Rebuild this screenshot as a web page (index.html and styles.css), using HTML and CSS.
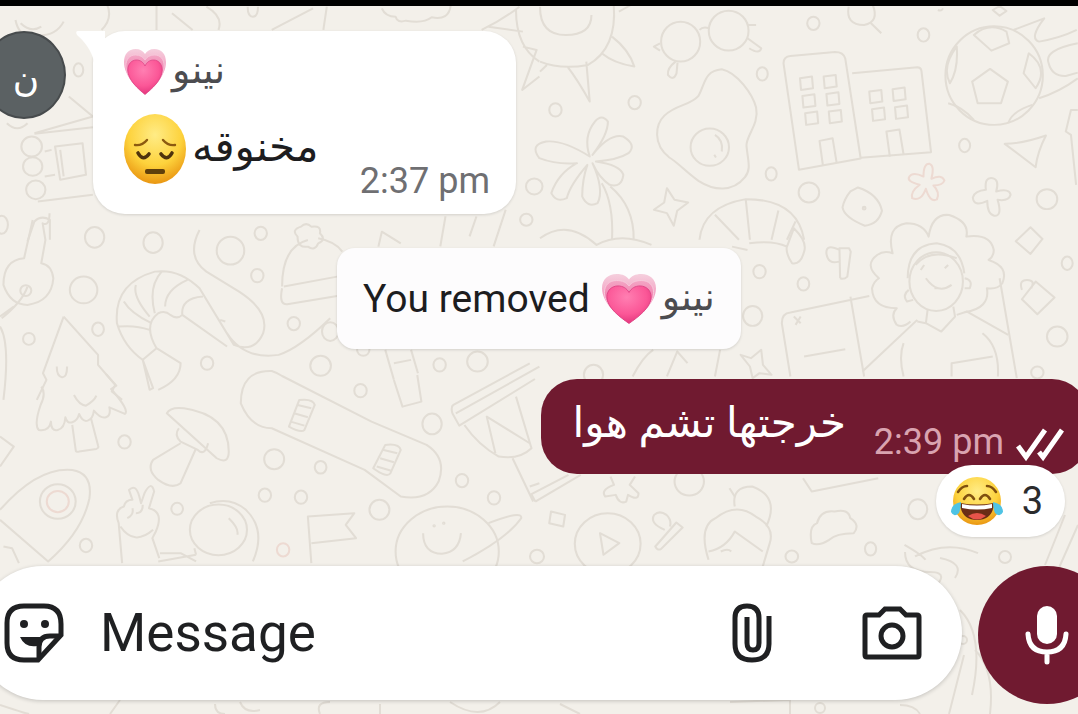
FILE: index.html
```html
<!DOCTYPE html>
<html lang="en">
  <head>
    <meta charset="UTF-8" />
    <meta name="viewport" content="width=device-width, initial-scale=1.0" />
    <title>Chat</title>
    <link rel="stylesheet" href="styles.css">
  </head>
  <body>
    <!-- wallpaper doodles -->
    <svg class="wallpaper" viewBox="0 0 1078 714" preserveAspectRatio="xMinYMin slice" aria-hidden="true">
      <defs>
        <linearGradient id="heart-back" x1="0" y1="0" x2="0" y2="1">
          <stop offset="0" stop-color="#f5cfdd" />
          <stop offset=".5" stop-color="#f39abf" />
          <stop offset="1" stop-color="#f0609c" />
        </linearGradient>
        <linearGradient id="heart-mid" x1="0" y1="0" x2="0" y2="1">
          <stop offset="0" stop-color="#f3a5c4" />
          <stop offset="1" stop-color="#ee5596" />
        </linearGradient>
        <radialGradient id="heart-front" cx=".45" cy=".3" r=".75">
          <stop offset="0" stop-color="#ff7fb2" />
          <stop offset=".6" stop-color="#fb5797" />
          <stop offset="1" stop-color="#e02f78" />
        </radialGradient>
        <radialGradient id="face" cx=".5" cy=".3" r=".72">
          <stop offset="0" stop-color="#ffec86" />
          <stop offset=".6" stop-color="#fdd23c" />
          <stop offset="1" stop-color="#e8920f" />
        </radialGradient>
        <symbol id="heart" viewBox="0 0 44 46" preserveAspectRatio="none">
          <path fill="url(#heart-back)" d="M22 45C14 39 0 27 0 13 0 5 5 0 12 0c5 0 8 2 10 5 2-3 5-5 10-5 7 0 12 5 12 13 0 14-14 26-22 32z" />
          <path fill="url(#heart-mid)" stroke="#f7cbdc" stroke-width=".8" d="M22 45C14 39 2 29 2 17 2 10 6 6 12 6c5 0 8 2 10 5 2-3 5-5 10-5 6 0 10 4 10 11 0 12-12 22-20 28z" />
          <path fill="url(#heart-front)" stroke="#de4384" stroke-width=".8" d="M22 45.500C15 40 4 31 4 21c0-6 4-10 9-10 4 0 7 2 9 6 2-4 5-6 9-6 5 0 9 4 9 10 0 10-11 19-18 24.500z" />
        </symbol>
      </defs>

      <g class="doodle" transform="scale(.344 .333)">
        <path d="M45 60q10 50 45 45 70 10 95-40M60 70q30 30 60 10M310 10q20 45-15 80M455 10v80M500 40l60 50M600 20q50 30 35 70M720 20q0 30 15 30t15-30M790 90l120-65M950 20l-10 70M1110 25q10 25 40 25 5 20 30 12 50 10 75-10 50 10 55-35M1400 90q60-30 110-70M1420 80l100 15M1500 30q0 110 68 155M1520 140l40 10-42 120 50-40" />
        <ellipse cx="228" cy="210" rx="14" ry="20" /><path d="M20 370q30 30 60 0M200 290l70 60-170 50M100 402l170-20M160 440l80-10 10 95-75 15zM175 450l10 80M110 605l160-20M130 455l20-5M130 530l30-5" />
        <circle cx="92" cy="440" r="30" /><circle cx="95" cy="500" r="28" /><circle cx="104" cy="570" r="28" />
        <ellipse cx="5" cy="675" rx="18" ry="27" /><path d="M80 725l20-60q20-20 45-5v60" />
        <circle cx="1553" cy="560" r="24" /><circle cx="1530" cy="660" r="18" />
        <path d="M1295 650l-15 90M1385 650l-20 60M1470 630l-35 110" />
      </g>

      <g class="doodle" transform="translate(540) scale(.343 .333)">
        <path d="M0 20q0 85 75 85t75-60M215 15q10 130-75 180-80 15-140-10M210 110q50 40 65 90-60-10-95-40M0 215l20-20M80 200q30 40 65 105l-10-120" />
        <ellipse cx="410" cy="125" rx="57" ry="60" /><ellipse cx="550" cy="92" rx="58" ry="60" />
        <path d="M465 90q10-12 28-5M350 130l-18 10 18 12M395 185q-25 20-22 40 15 20 25-5l3-32M605 115l40 30q-5 20-35 0M605 75h25M230 35l35-20" />
        <path d="M900 20q-10 55 45 55 45-10 25-60M965 70l30 30M1175 25q-5 10-15 5M1320 30l20-12 20 15-20 14z" />
        <ellipse cx="797" cy="70" rx="18" ry="20" /><ellipse cx="1118" cy="105" rx="17" ry="20" /><ellipse cx="648" cy="222" rx="16" ry="20" /><ellipse cx="276" cy="308" rx="18" ry="20" /><ellipse cx="45" cy="330" rx="18" ry="20" /><ellipse cx="674" cy="522" rx="16" ry="20" /><ellipse cx="1238" cy="437" rx="16" ry="20" /><ellipse cx="784" cy="578" rx="30" ry="30" /><ellipse cx="1478" cy="598" rx="30" ry="30" />
        <path d="M530 208c45 10 90 75 100 115 10 50-30 85-28 115 4 45 15 70-5 95-35 45-90 40-135 10-35-25-60-55-85-70-50-40-40-100-15-125 35-35 75-30 100-60 20-35 15-75 68-80z" />
        <ellipse cx="495" cy="442" rx="56" ry="56" /><path d="M510 405q25 15 20 50M508 465l5 8" />
        <path d="M145 470q-20-60 15-105 20-25 38 0 0 40-45 100 50-65 90-55 40 25 15 50-30 20-95 25 70 10 80 40-5 40-40 30-30-20-50-65 35 80 15 120-30 15-45-20 0-50 15-95-50 60-60 100-30 15-45-15 20-60 75-90-60 5-110-15-30-40 20-50 50-5 127 45z" />
        <path d="M180 550q35 60 30 170M205 560q70 60 68 160M370 565l22 35 40 8-32 25-10 45-20-38-38-10 30-22z" />
        <path d="M465 720q10-100 135-122 150 0 170 122M510 645l70 75M600 600l12 120M695 632l-20 88M745 665l-25 55" />
        <path d="M755 510L710 190q0-20 20-22l130-12q25 0 30 20l45 300zM910 220l190-18q10 0 12 10l28 245-205 17" />
        <path d="M758 235l35-5 3 35-35 5zM827 230l35-5 3 35-35 5zM765 288l35-5 3 35-35 5zM835 282l35-5 3 35-35 5zM773 340l35-5 3 35-35 5zM842 335l35-5 3 35-35 5zM960 275l35-5 3 35-35 5zM1028 268l35-5 3 35-35 5zM968 328l35-5 3 35-35 5zM1035 322l35-5 3 35-35 5zM825 498l-10-75 38-8 12 75M1020 470l-10-75 38-6 12 75" />
        <path d="M905 575l22-12q60 20 70 70-10 40-50 45-60-25-65-55 5-25 23-48z" /><circle cx="945" cy="625" r="4" />
        <path class="blush" d="M1118 530q0-40 18-38 15 5 5 45 30-15 38 5-5 15-32 15 20 20 10 42-20 10-32-32-15 40-40 28-5-20 22-40-40-10-30-25 10-15 41 0z" />
        <path d="M1300 570q-5-40 20-35 20 5 10 40 40-10 42 10-5 20-38 15 15 50-10 48-20-5-20-45-40 20-42-10 5-20 38-23z" />
        <ellipse cx="1324" cy="227" rx="142" ry="148" />
        <path d="M1260 245l52-38 52 38-20 65h-68zM1265 105q45-40 95-10l8 35-52 22zM1215 140q-45 60-20 110 25-40 20-110zM1425 160l-15 60 35 45q40-60-20-105zM1190 310q40 10 75 50M1365 370q10-35 70-55M1380 90l90-35q-45 60-15 70 60-10 110-35M1568 130q-100 20-85 60 10 40 50 38l35-10M1455 295q60-20 113-60" />
        <path d="M1355 432q50 0 120-25-25 50-30 95zM1568 330l-20 0-15 65 15 10 15 150" />
      </g>

      <g class="doodle" transform="translate(0 220) scale(.344 .333)">
        <path d="M95 0L70 115q-60 5-60 80 20 60 70 60 70-10 75-80-5-40-35-45l12-70-8-50q20 10 20-30M5 295q60-50 75-95M0 320q30 50 10 220M0 290l40-30" />
        <ellipse cx="75" cy="212" rx="16" ry="16" /><ellipse cx="275" cy="52" rx="28" ry="31" /><ellipse cx="445" cy="68" rx="28" ry="31" /><ellipse cx="243" cy="210" rx="40" ry="40" /><ellipse cx="670" cy="92" rx="40" ry="42" /><ellipse cx="758" cy="40" rx="18" ry="20" /><ellipse cx="748" cy="167" rx="18" ry="20" /><ellipse cx="285" cy="328" rx="17" ry="20" /><ellipse cx="84" cy="357" rx="17" ry="18" /><ellipse cx="602" cy="430" rx="18" ry="20" /><ellipse cx="932" cy="438" rx="30" ry="30" /><ellipse cx="854" cy="311" rx="18" ry="20" /><ellipse cx="960" cy="335" rx="24" ry="28" /><ellipse cx="1278" cy="435" rx="18" ry="20" /><ellipse cx="1388" cy="425" rx="30" ry="30" /><circle cx="1056" cy="390" r="18" />
        <path d="M580 30q-40 80 20 125l95 60q90 60 70 125-25 60-85 35L580 205q-60-60-130-50Q330 190 340 310q20 70 75 110l20 90 10-5-30-85M415 420l40-35 70 45q0 50-65 80M455 385q-40-70 5-105 20-10 35 5 20 15 35 0l130 95M530 285q-5-50 60-55M480 260q0-50 65-80M450 280q-20-80 20-125M435 290q-50-60-40-95M440 310q-60-30-80-65M345 320q50-5 90 10M660 340q50 80 150 65 60-20 150-110M640 300l15 5" />
        <path d="M820 200q0-120 75-140M925 55q50 10 70 40M825 200l155-30M820 205q-10 50 15 48l145-25M865 50q-20-20 10-30 15-15 30 0 30-5 25 20 20 20-5 30-10 25-30 10-30 5-30-30z" />
        <path d="M1100 80l10-45 55 35M1120 390l25 90M1195 390l20 70M1145 430l50-10" />
        <path d="M185 290L125 460l10 20-28 60M185 290l100 115v30l50 60-10 20 30 25M165 440q0 30 15 32t15-32" />
      </g>

      <g class="doodle" transform="translate(540 200) scale(.343 .333)">
        <path d="M0 115q80-60 165 20 70-40 160 0M610 130q70-10 110 10l20-55q40 40 30 70-10 40-35 35-20-30-15-52M560 140l45 10M875 235l-2-90h28l5 10-10 75q-10 10-21 5M873 150q-40-20-38 10 5 35 36 25" />
        <ellipse cx="640" cy="215" rx="18" ry="20" /><ellipse cx="768" cy="252" rx="17" ry="20" /><ellipse cx="620" cy="348" rx="28" ry="30" /><ellipse cx="1508" cy="410" rx="30" ry="30" /><ellipse cx="1537" cy="190" rx="16" ry="20" /><ellipse cx="156" cy="525" rx="28" ry="30" /><circle cx="1450" cy="518" r="18" />
        <path d="M1430 82l35 35-35 45-43-38zM1445 245l55 48-50 50-45-45zM1405 270q-10-30 15-30t12 25" />
        <path d="M1040 375q-20-30 0-50-70 0-72-60 5-20 20-30-45-40-5-70 20-15 45-5-20-80 40-90 50 0 65 40 10-70 60-65 60 20 50 65 70-10 80 40 0 20-15 30 60 20 40 70-15 20-45 15 10 60-65 72M1040 375q20 10 40-10" />
        <ellipse cx="1155" cy="245" rx="78" ry="88" /><path d="M1072 235q0-100 85-105 70 10 80 90M1095 195q40-50 120-20M1110 210l10-15M1180 205l10-10M1125 235q35 50 75 20M1150 265l10 0M1238 235q25 5 15 30l-15 0M1075 270q-20 15-5 35l18-5M1130 330l-5 40 45 25 40-45-5-30M1100 360L940 515M1125 370l-25-5M1215 345l30-10 120 70M1290 400q50 40 45 130M1060 430q-15 40 0 100M1200 530v-40l120-20" />
        <path d="M730 530L705 370q0-30 25-32l230-50M905 290l40 240M1340 235l50 300M770 470l120-22M740 350l20 20M760 350l-15 25M585 465l30 10 30-25 5 45 25 30-35-5-20 15-8-35zM270 530q30-60 60-80M525 450l-15 80M370 530l30-75 30 35" />
      </g>

      <g class="doodle" transform="translate(0 370) scale(.344 .333)">
        <path d="M120 50q15 20-2 55-20 60-5 75 30 5 35-25 0 30 20 25t22-38q5 20 20 15t20-25q10 25 25 20t18-30q20 25 35 20t10-30l45 20q15-10-40-75l15-10-30-35M215 75q15 30 35 32 25-15 30-30M210 165l10 75q0 8 10 5l50-8q8-3 5-10l-20-80M0 200l40 30-40 60" />
        <path d="M0 420q110-130 210-120 60 10 50 85-20 100-120 190L0 450M10 530l25 5 20 45" />
        <ellipse cx="168" cy="395" rx="52" ry="52" /><ellipse class="blush" cx="168" cy="395" rx="32" ry="32" /><ellipse cx="250" cy="527" rx="18" ry="20" /><ellipse cx="362" cy="216" rx="18" ry="20" /><ellipse cx="797" cy="268" rx="29" ry="30" /><ellipse cx="932" cy="292" rx="17" ry="19" /><ellipse cx="770" cy="376" rx="18" ry="20" /><ellipse cx="875" cy="382" rx="18" ry="20" /><ellipse cx="515" cy="417" rx="17" ry="18" /><ellipse class="blush" cx="823" cy="540" rx="18" ry="20" /><ellipse cx="1103" cy="420" rx="29" ry="30" /><ellipse cx="1256" cy="162" rx="28" ry="31" /><ellipse cx="1048" cy="62" rx="18" ry="20" /><ellipse cx="1343" cy="332" rx="18" ry="20" /><ellipse cx="1436" cy="384" rx="18" ry="20" />
        <path d="M485 130q10-20 50-15 130 20 130 130 0 40-35 20zM520 175q-15 20 5 40l50 25q20 20 30-20M525 220l-80 50q-20 30 15 60 40 30 65 10l45-105" />
        <path d="M355 580l-10-120q-15-40 15-50 5-20 25-20l-10-30q20-20 30 20l5 20 10-30q20-40 28-5l-15 50q45 10 20 70l-10 20 20 60M350 470q40 60 95 10M370 445q20-10 15-30M395 430q20 0 20-25" />
        <ellipse cx="635" cy="480" rx="83" ry="76" /><path d="M610 400q60-20 105 20 60 60 20 155M570 555l-5-20M665 445q30 30 25 50M465 550h60l45 25M460 575l110-20" />
        <path d="M905 580l-10-140 135-10-25 35 30 40-130 15" />
        <path d="M700 100q0-100 90-97 15 5 30 15L1080 155l160 70q60 40 35 110-30 60-110 45L1060 300 790 175q-60 0-90-75z" />
        <path d="M870 90q40-5 45 15l-30 75q-10 10-45-10zM865 105l40 10M855 130l40 12M845 155l40 12M1120 225q40-5 45 15l-30 70q-10 15-50-15zM1115 240l40 10M1105 265l40 12M1095 290l40 12" />
        <path d="M1145 30l25 80 55-15-12-80M1318 105L1540 -20M1315 130q-5-20 3-25M1315 130l20 37 220-140M1325 130L1568 -10M1350 165q40 60 100 95 60 10 95-25L1500 80M1440 250l-25-110 125 80M1490 265l60 130M1540 350l28-10" />
        <ellipse cx="1300" cy="545" rx="150" ry="135" /><path d="M1420 460q100-40 95-15-40 60-170 130M1230 490q0 60 55 62 50-5 55-62" /><circle cx="1262" cy="468" r="2" /><circle cx="1290" cy="460" r="2" />
      </g>

      <g class="doodle" transform="translate(530 370) scale(.35 .333)">
        <path d="M0 375l110-60M15 395l130-80M5 375l10 20M230 320l10 25q-40 15-25 35l30-5q10 30 30 20l5-20q30 20 30-5l-25-25 15-25M780 325l25 40 190-40M60 425l40 10-5 35-40-10zM200 490l55 30-45 35zM570 355l15 25M385 480q-45-20-30-45 15-15 35 0 15 15 10 35M358 530l60-72 18 15-62 65q-10 5-16-8z" />
        <circle cx="455" cy="335" r="42" /><ellipse cx="222" cy="522" rx="94" ry="92" /><ellipse cx="1108" cy="418" rx="27" ry="30" /><ellipse cx="973" cy="537" rx="16" ry="20" /><circle cx="20" cy="560" r="20" /><circle cx="748" cy="560" r="18" />
        <path d="M585 410q-10-60 50-60 80 30 40 120M510 570q-30-100 20-125 60-50 115-5 55 30 40 80l-20 70M510 545q50-10 75-60l80 60M545 545q20-10 30 0M805 520q-10-50 15-60 10-40 50-35 40-10 45 20 30 20 10 45-50 0-70 20-30 20-50 10zM1070 525q50 30 60 45M1100 560q90-50 180-10" />
      </g>

      <g class="doodle">
        <path d="M905 552q0 20 25 20t-6 25M940 558q25 5 15 20M1045 565l20-50M1058 570l20-45M960 610q25 25 12 85M975 650q20 20 15 64M964 655q-5 20-15 59M0 705q30 10 30 9M110 714l10-14M215 704q0 10 10 10M240 702q5 12 20 8M320 714q-5-12 10-12M380 704v10M450 702q30 20 50 0M560 704l20 10M730 702l60-2v14M900 705q15 0 20 9" />
        <circle cx="1005" cy="557" r="6" /><circle cx="820" cy="708" r="5" /><circle cx="963" cy="640" r="4" />
      </g>
    </svg>

    <div class="status-strip"></div>
    <main class="chat">
      <div class="row incoming">
        <span class="avatar">ن</span>
        <article class="bubble bubble-in">
          <svg class="tail" viewBox="0 0 30 36" aria-hidden="true"><path d="M3 0h27v36H20Q18 18 2 4 0 0 3 0z" /></svg>
          <header class="sender">
            <svg class="sender-heart" aria-label="heart"><use href="#heart" /></svg>
            <span class="name" lang="ar" dir="rtl">نينو</span>
          </header>
          <div class="line">
            <svg class="sad" viewBox="0 0 62 72" aria-label="pensive face">
              <ellipse cx="31" cy="36" rx="31" ry="35" fill="url(#face)" />
              <g fill="none" stroke-linecap="round">
                <path stroke="#8c5a10" stroke-width="2.4" d="M11 32q7 1 12-5M51 32q-7 1-12-5" />
                <path stroke="#4f330d" stroke-width="3.6" d="M14 40q5 9 11 1M37 41q6 8 11-1" />
              </g>
              <rect x="21" y="56" width="20" height="5" rx="2" fill="#5f3f0b" />
            </svg>
            <p class="text" lang="ar" dir="rtl">مخنوقه</p>
            <time class="time">2:37 pm</time>
          </div>
        </article>
      </div>

      <p class="notice">
        <span>You removed</span>
        <svg class="notice-heart" aria-label="heart"><use href="#heart" /></svg>
        <span class="name" lang="ar" dir="rtl">نينو</span>
      </p>

      <article class="bubble bubble-out">
        <p class="text" lang="ar" dir="rtl">خرجتها تشم هوا</p>
        <time class="time">2:39 pm</time>
        <svg class="ticks" viewBox="0 0 48 34" aria-label="delivered"><path d="M2 18l8 11L29 2M23 24l4 5L46 2" /></svg>
        <button class="reaction" type="button">
          <svg class="joy" viewBox="0 0 54 54" aria-label="tears of joy">
            <circle cx="27" cy="27" r="24" fill="url(#face)" />
            <path d="M8 18q4-6 9-6M46 18q-4-6-9-6M14 25q5-8 10 0M30 25q5-8 10 0" fill="none" stroke="#80500f" stroke-width="2.6" stroke-linecap="round" />
            <path d="M10 29q17 3 34 0-1 17-17 17T10 29z" fill="#6b2d16" />
            <path d="M12 30q15 3 30 0v4q-15 3-30 0z" fill="#fff" />
            <path d="M18 42q9-6 18 0-9 7-18 0z" fill="#e8544b" />
            <path d="M11 28Q1 30 1 38q3 6 8 1 2-5 2-11zM43 28q10 2 10 10-3 6-8 1-2-5-2-11z" fill="#4fc3e4" />
          </svg>
          <span>3</span>
        </button>
      </article>

      <form class="composer">
        <div class="field">
          <button class="icon-button" type="button" aria-label="Stickers">
            <svg class="sticker" viewBox="0 0 60 60">
              <path d="M20 3h20q17 0 17 18v11L34 57H20Q3 57 3 40V20Q3 3 20 3z" />
              <path d="M57 33H46q-11 0-11 11v12" />
              <path class="solid" d="M16 34h23q-5 4-6 9-12 2-17-9z" /><circle class="solid" cx="20" cy="21" r="4" /><circle class="solid" cx="41" cy="21" r="4" />
            </svg>
          </button>
          <input class="message" type="text" placeholder="Message" aria-label="Message">
          <button class="icon-button" type="button" aria-label="Attach">
            <svg class="clip" viewBox="0 0 40 60"><path d="M37 13v28q0 16-17 16T3 41V15Q3 3 15 3t12 12v25q0 7-6 7t-6-7V14" /></svg>
          </button>
          <button class="icon-button" type="button" aria-label="Camera">
            <svg class="camera" viewBox="0 0 60 54"><path d="M5 9h12l6-6h15l6 6h11q2 0 2 2v38q0 2-2 2H5q-2 0-2-2V11q0-2 2-2z" /><circle cx="30" cy="30" r="11" /></svg>
          </button>
        </div>
        <button class="mic" type="button" aria-label="Record">
          <svg viewBox="0 0 44 60"><rect x="12" y="1" width="20" height="38" rx="10" /><path d="M3 29q1 18 19 18t19-18M22 47v10" /></svg>
        </button>
      </form>
    </main>
  </body>
</html>
```
FILE: styles.css
```css
* {
  box-sizing: border-box;
}
body {
  margin: 0;
  min-height: 100vh;
  position: relative;
  display: flex;
  flex-direction: column;
  overflow: hidden;
  background-color: #f3f0ea;
  font-family: Roboto, 'DejaVu Sans', sans-serif;
  color: #1d1d1f;
}
p {
  margin: 0;
}
button {
  border: 0;
  padding: 0;
  background: none;
  font: inherit;
  color: inherit;
}
svg {
  display: block;
  flex: none;
}

.wallpaper {
  position: absolute;
  inset: 0;
  width: 100%;
  height: 100%;
  z-index: -1;
}
.doodle {
  fill: none;
  stroke: #e2ddd5;
  stroke-width: 6;
  stroke-linejoin: round;
}
.doodle:last-child {
  stroke-width: 2;
}
.blush {
  stroke: #eddad2;
}

.status-strip {
  height: 6px;
  background: #000;
}
.chat {
  flex: 1;
  display: flex;
  flex-direction: column;
  padding: 25px 0 10px;
  overflow: hidden;
}

.row {
  display: flex;
  align-items: flex-start;
  gap: 27px;
}
.avatar {
  width: 84px;
  height: 88px;
  margin-left: -18px;
  padding: 4px 0 0 4px;
  border-radius: 50%;
  background: #5b6163;
  border: 2px solid #474b4d;
  color: #fff;
  font-size: 36px;
  line-height: 84px;
  text-align: center;
}
.bubble {
  position: relative;
}
.bubble-in {
  width: 423px;
  height: 183px;
  padding: 18px 26px 18px 31px;
  border-radius: 32px;
  background: #fff;
  box-shadow: 0 1px 3px #0002;
}
.tail {
  position: absolute;
  top: 0;
  left: -18px;
  width: 30px;
  height: 36px;
  fill: #fff;
}
.sender {
  display: flex;
  align-items: center;
  gap: 6px;
  height: 46px;
}
.sender-heart {
  width: 42px;
  height: 46px;
}
.name {
  font-size: 38px;
  line-height: 40px;
  padding-bottom: 4px;
  color: #4c4c50;
}
.line {
  display: flex;
  gap: 6px;
  padding-top: 18px;
}
.sad {
  width: 62px;
  height: 72px;
}
.text {
  font-size: 42px;
  line-height: 68px;
  white-space: nowrap;
}
.time {
  font-size: 36px;
  line-height: 40px;
  color: #6f6f72;
  white-space: nowrap;
}
.bubble-in .time {
  margin-left: auto;
  align-self: flex-end;
}
.line .time {
  margin-bottom: -16px;
}

.notice {
  align-self: center;
  display: flex;
  align-items: center;
  height: 101px;
  margin-top: 34px;
  padding: 0 26px;
  border-radius: 18px;
  background: #fdfcfd;
  box-shadow: 0 1px 3px #0002;
  font-size: 39px;
}
.notice-heart {
  width: 54px;
  height: 50px;
  margin: 0 6px 0 12px;
}

.bubble-out {
  align-self: flex-end;
  display: flex;
  align-items: flex-end;
  height: 95px;
  margin: 30px -10px 0 0;
  padding: 0 24px 12px 31px;
  border-radius: 36px;
  background: #701a30;
  color: #fff;
}
.bubble-out .text {
  align-self: flex-start;
  padding-top: 10px;
}
.bubble-out .time {
  margin-left: 28px;
  color: #d9a3b0;
}
.ticks {
  width: 48px;
  height: 34px;
  margin-left: 12px;
  fill: none;
  stroke: #fff;
  stroke-width: 5;
}
.reaction {
  position: absolute;
  top: 86px;
  right: 23px;
  display: flex;
  align-items: center;
  gap: 18px;
  height: 72px;
  padding: 0 22px 0 14px;
  border-radius: 36px;
  background: #fff;
  box-shadow: 0 1px 3px #0002;
  color: #2b2b2d;
  font-size: 38px;
}
.joy {
  width: 54px;
  height: 54px;
}

.composer {
  display: flex;
  align-items: flex-start;
  gap: 16px;
  margin: auto -38px 0 -24px;
}
.field {
  flex: 1;
  min-width: 0;
  display: flex;
  align-items: center;
  height: 134px;
  padding: 0 40px 0 28px;
  border-radius: 67px;
  background: #fff;
  box-shadow: 0 1px 4px #0003;
}
.icon-button svg {
  fill: none;
  stroke: #1f2022;
  stroke-width: 5;
}
.icon-button .solid {
  fill: #1f2022;
  stroke: none;
}
.sticker {
  width: 60px;
  height: 60px;
}
.message {
  flex: 1;
  min-width: 0;
  border: 0;
  outline: 0;
  padding: 0 0 0 36px;
  background: none;
  font: 53px Roboto, 'DejaVu Sans', sans-serif;
  color: #1f2022;
}
.message::placeholder {
  color: #1f2022;
  opacity: 1;
}
.clip {
  width: 40px;
  height: 60px;
  margin-right: 90px;
}
.camera {
  width: 60px;
  height: 54px;
}
.mic {
  flex: none;
  display: grid;
  place-items: center;
  width: 138px;
  height: 138px;
  border-radius: 50%;
  background: #701a30;
}
.mic svg {
  width: 44px;
  height: 60px;
  fill: #fff;
}
.mic path {
  fill: none;
  stroke: #fff;
  stroke-width: 5;
  stroke-linecap: round;
}
```
